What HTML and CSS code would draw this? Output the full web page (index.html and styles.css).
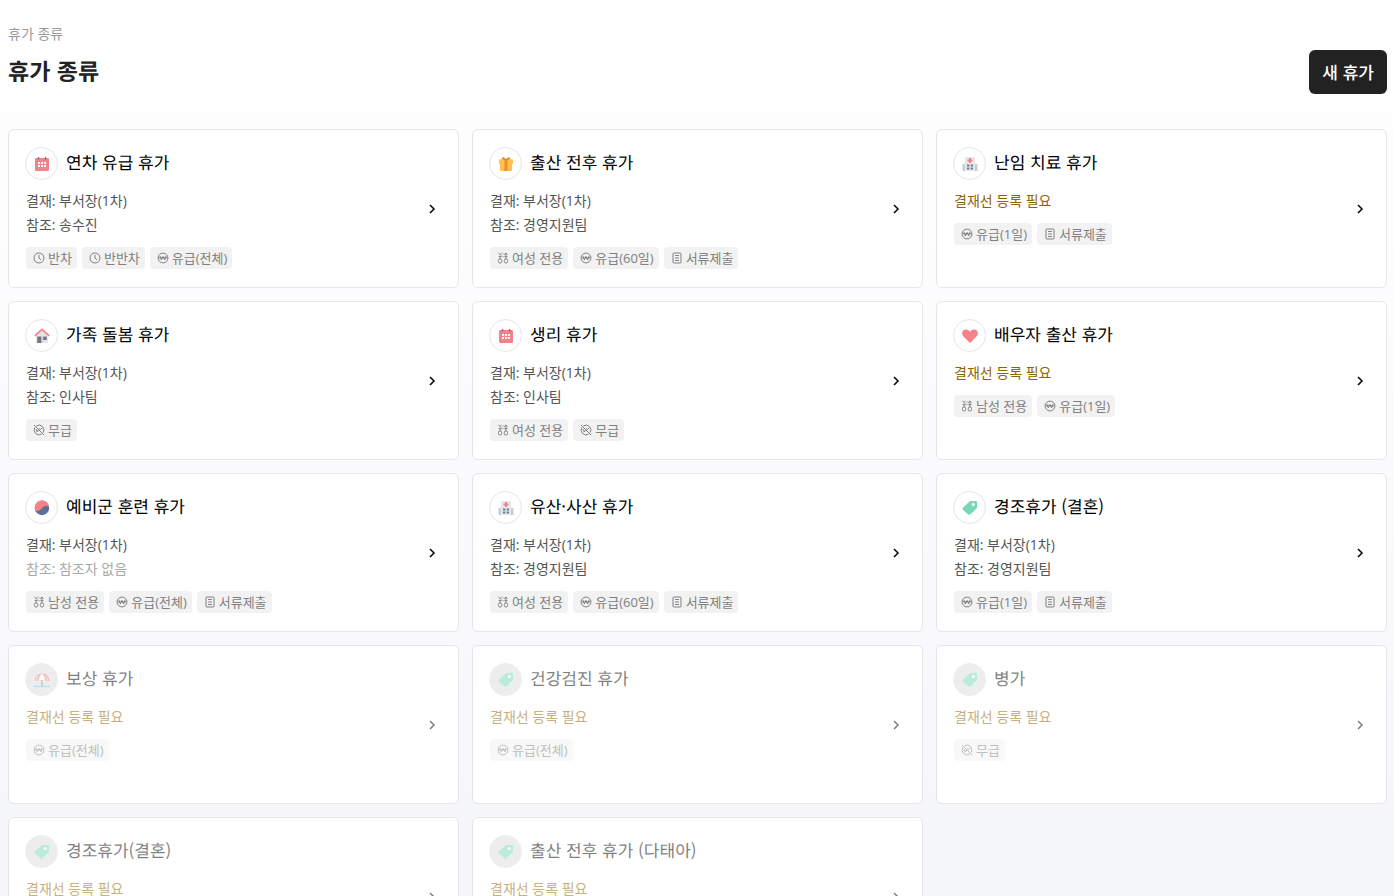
FILE: index.html
```
<!DOCTYPE html>
<html lang="ko">
<head>
<meta charset="utf-8">
<meta name="viewport" content="width=device-width, initial-scale=1">
<title>휴가 종류</title>
<link rel="stylesheet" href="styles.css">
</head>
<body>
<svg class="sprite" aria-hidden="true">
  <symbol id="calendar" viewBox="0 0 16 16"><rect x="1" y="2" width="14" height="13" rx="1.3" fill="#f5828a"/><path d="M4.5 1v2.5M11.500 1v2.500" stroke="#6b7280" stroke-width="1.2"/><path d="M4 6h2v2H4zM7 6h2v2H7zM10 6h2v2h-2zM4 9h2v2H4zM7 9h2v2H7zM10 9h2v2h-2z" fill="#fff"/></symbol>
  <symbol id="gift" viewBox="0 0 16 16"><path d="M1 4.200q0-1 1-1h12q1 0 1 1V8h-1v6q0 1-1 1H3q-1 0-1-1V8H1z" fill="#ffc14d"/><path d="M6.200 3.500h3.600V15H6.200z" fill="#f09a35"/><path d="M8 4.500 4 3.300Q3.500 1 5.500 1.300L8 3l2.500-1.700q2-.3 1.500 2z" fill="#e08a2d"/><path d="M8 5v10" stroke="#d98428" stroke-width="1" stroke-dasharray="1.500 1"/></symbol>
  <symbol id="hospital" viewBox="0 0 16 16"><path d="M3 1h10v14H3z" fill="#e4e8ec"/><path d="M.5 8H3v7H.5zM13 8h2.500v7H13z" fill="#c5cdd5"/><path d="M7 2h2v1.500h1.500v2H9V7H7V5.500H5.500v-2H7z" fill="#f5828a"/><path d="M5 8.500h2.300v2H5zM8.700 8.500H11v2H8.700zM5 11.500h2.300v2H5zM8.700 11.500H11v2H8.700z" fill="#707986"/></symbol>
  <symbol id="house" viewBox="0 0 16 16"><path d="M2 7.500 8 2l6 5.500V15H2z" fill="#e3e6e9"/><path d="M.8 7.800 8 1.300l7.200 6.500" fill="none" stroke="#f5828a" stroke-width="1.700"/><path d="M3.200 8.500h4V15h-4zM9.200 8.500h3.500V12H9.200z" fill="#727780"/><path d="M7.300 8.500h1V15h-1z" fill="#aab1b8"/></symbol>
  <symbol id="heart" viewBox="0 0 16 16"><path d="M8 15 1.500 8.500C-1.500 5.300.7 1.500 4 1.500q2.500 0 4 2.200 1.500-2.200 4-2.200c3.300 0 5.500 3.800 2.500 7z" fill="#f5828a"/></symbol>
  <symbol id="taegeuk" viewBox="0 0 16 16"><circle cx="8" cy="8" r="7.200" fill="#5e6f94"/><path d="M1.300 10.300A7.200 7.200 0 1 1 15.100 7.200C13.500 5.500 10 5.200 8 8 6 11 3 11.800 1.300 10.300z" fill="#f5828a"/></symbol>
  <symbol id="label" viewBox="0 0 16 16"><path d="M7.500 1.500q.6-.6 1.300-.6h5q1.300 0 1.300 1.300v5q0 .7-.6 1.300l-6.300 6q-1 .9-2 0L.9 9.700q-.9-1 0-2z" fill="#79d8b4"/><circle cx="11.300" cy="4.500" r="1.500" fill="#fff"/></symbol>
  <symbol id="parasol" viewBox="0 0 16 16"><path d="M.8 9C.5 4.600 3.600 1.500 8 1.500S15.500 4.600 15.200 9l-2.700-.6L8 8.600l-4.500-.2z" fill="#f7777f"/><path d="M5 9C5 5 6.500 2 8 2s3 3 3 7l-3-1z" fill="#fff"/><path d="M2.600 8.200c0-1.800.6-3.200 1.500-4.200M13.400 8.200c0-1.800-.6-3.200-1.500-4.200" fill="none" stroke="#fff" stroke-width=".7"/><path d="M8 8V14.500" stroke="#777e88" stroke-width="1.200"/><path d="M0 14.500h16" stroke="#72c4f6" stroke-width="1.400"/></symbol>
  <symbol id="clock" viewBox="0 0 12 12"><circle cx="6" cy="6" r="5"/><path d="M6 3v3.200l2 1.600"/></symbol>
  <symbol id="won" viewBox="0 0 12 12"><circle cx="6" cy="6" r="4.900"/><path d="m3 4 1.300 4L6 4.400 7.700 8 9 4M1.500 5.800h9"/></symbol>
  <symbol id="unpaid" viewBox="0 0 12 12"><path d="M3.500 1.800a4.900 4.900 0 0 1 6.700 6.700M8.500 10.200a4.900 4.900 0 0 1-6.700-6.700M1 1l10 10M3 5l1.300 3 1.500-2.500M6.300 4.200l1.200 1.500L9 4"/></symbol>
  <symbol id="gender" viewBox="0 0 12 12"><rect x="1.500" y="7" width="3.200" height="4" rx="1.400"/><rect x="7.300" y="7" width="3.200" height="4" rx="1.400"/><path d="M3.100 7V5M1.700 4.600h2.800M1.500 1l3 2.800M4.500 1 3.200 2.300M8.900 7V1M7.200 2.700 8.900 1l1.700 1.700M7.400 4.600h3M6 1.500v1M6 4v1"/></symbol>
  <symbol id="document" viewBox="0 0 12 12"><rect x="2" y="1" width="8" height="10" rx=".8"/><path d="M4 3.500h4M4 6h4M4 8.500h4"/></symbol>
  <symbol id="chevron" viewBox="0 0 10 10"><path d="m3 1 4 4-4 4"/></symbol>
</svg>
<main class="page">
  <header class="header">
    <div>
      <p class="crumb">휴가 종류</p>
      <h1 class="title">휴가 종류</h1>
    </div>
    <button class="new" type="button">새 휴가</button>
  </header>
  <div class="grid">
    <a class="card" href="#"><div class="body"><h2 class="name"><span class="circle"><svg><use href="#calendar"/></svg></span>연차 유급 휴가</h2><div class="info"><p>결재: 부서장(1차)</p><p>참조: 송수진</p></div><div class="tags"><span class="tag"><svg><use href="#clock"/></svg>반차</span><span class="tag"><svg><use href="#clock"/></svg>반반차</span><span class="tag"><svg><use href="#won"/></svg>유급(전체)</span></div></div><svg class="chevron"><use href="#chevron"/></svg></a>
    <a class="card" href="#"><div class="body"><h2 class="name"><span class="circle"><svg><use href="#gift"/></svg></span>출산 전후 휴가</h2><div class="info"><p>결재: 부서장(1차)</p><p>참조: 경영지원팀</p></div><div class="tags"><span class="tag"><svg><use href="#gender"/></svg>여성 전용</span><span class="tag"><svg><use href="#won"/></svg>유급(60일)</span><span class="tag"><svg><use href="#document"/></svg>서류제출</span></div></div><svg class="chevron"><use href="#chevron"/></svg></a>
    <a class="card" href="#"><div class="body"><h2 class="name"><span class="circle"><svg><use href="#hospital"/></svg></span>난임 치료 휴가</h2><div class="info"><p class="warn">결재선 등록 필요</p></div><div class="tags"><span class="tag"><svg><use href="#won"/></svg>유급(1일)</span><span class="tag"><svg><use href="#document"/></svg>서류제출</span></div></div><svg class="chevron"><use href="#chevron"/></svg></a>
    <a class="card" href="#"><div class="body"><h2 class="name"><span class="circle"><svg><use href="#house"/></svg></span>가족 돌봄 휴가</h2><div class="info"><p>결재: 부서장(1차)</p><p>참조: 인사팀</p></div><div class="tags"><span class="tag"><svg><use href="#unpaid"/></svg>무급</span></div></div><svg class="chevron"><use href="#chevron"/></svg></a>
    <a class="card" href="#"><div class="body"><h2 class="name"><span class="circle"><svg><use href="#calendar"/></svg></span>생리 휴가</h2><div class="info"><p>결재: 부서장(1차)</p><p>참조: 인사팀</p></div><div class="tags"><span class="tag"><svg><use href="#gender"/></svg>여성 전용</span><span class="tag"><svg><use href="#unpaid"/></svg>무급</span></div></div><svg class="chevron"><use href="#chevron"/></svg></a>
    <a class="card" href="#"><div class="body"><h2 class="name"><span class="circle"><svg><use href="#heart"/></svg></span>배우자 출산 휴가</h2><div class="info"><p class="warn">결재선 등록 필요</p></div><div class="tags"><span class="tag"><svg><use href="#gender"/></svg>남성 전용</span><span class="tag"><svg><use href="#won"/></svg>유급(1일)</span></div></div><svg class="chevron"><use href="#chevron"/></svg></a>
    <a class="card" href="#"><div class="body"><h2 class="name"><span class="circle"><svg><use href="#taegeuk"/></svg></span>예비군 훈련 휴가</h2><div class="info"><p>결재: 부서장(1차)</p><p class="none">참조: 참조자 없음</p></div><div class="tags"><span class="tag"><svg><use href="#gender"/></svg>남성 전용</span><span class="tag"><svg><use href="#won"/></svg>유급(전체)</span><span class="tag"><svg><use href="#document"/></svg>서류제출</span></div></div><svg class="chevron"><use href="#chevron"/></svg></a>
    <a class="card" href="#"><div class="body"><h2 class="name"><span class="circle"><svg><use href="#hospital"/></svg></span>유산·사산 휴가</h2><div class="info"><p>결재: 부서장(1차)</p><p>참조: 경영지원팀</p></div><div class="tags"><span class="tag"><svg><use href="#gender"/></svg>여성 전용</span><span class="tag"><svg><use href="#won"/></svg>유급(60일)</span><span class="tag"><svg><use href="#document"/></svg>서류제출</span></div></div><svg class="chevron"><use href="#chevron"/></svg></a>
    <a class="card" href="#"><div class="body"><h2 class="name"><span class="circle"><svg><use href="#label"/></svg></span>경조휴가 (결혼)</h2><div class="info"><p>결재: 부서장(1차)</p><p>참조: 경영지원팀</p></div><div class="tags"><span class="tag"><svg><use href="#won"/></svg>유급(1일)</span><span class="tag"><svg><use href="#document"/></svg>서류제출</span></div></div><svg class="chevron"><use href="#chevron"/></svg></a>
    <a class="card off" href="#"><div class="body"><h2 class="name"><span class="circle"><svg><use href="#parasol"/></svg></span>보상 휴가</h2><div class="info"><p class="warn">결재선 등록 필요</p></div><div class="tags"><span class="tag"><svg><use href="#won"/></svg>유급(전체)</span></div></div><svg class="chevron"><use href="#chevron"/></svg></a>
    <a class="card off" href="#"><div class="body"><h2 class="name"><span class="circle"><svg><use href="#label"/></svg></span>건강검진 휴가</h2><div class="info"><p class="warn">결재선 등록 필요</p></div><div class="tags"><span class="tag"><svg><use href="#won"/></svg>유급(전체)</span></div></div><svg class="chevron"><use href="#chevron"/></svg></a>
    <a class="card off" href="#"><div class="body"><h2 class="name"><span class="circle"><svg><use href="#label"/></svg></span>병가</h2><div class="info"><p class="warn">결재선 등록 필요</p></div><div class="tags"><span class="tag"><svg><use href="#unpaid"/></svg>무급</span></div></div><svg class="chevron"><use href="#chevron"/></svg></a>
    <a class="card off" href="#"><div class="body"><h2 class="name"><span class="circle"><svg><use href="#label"/></svg></span>경조휴가(결혼)</h2><div class="info"><p class="warn">결재선 등록 필요</p></div></div><svg class="chevron"><use href="#chevron"/></svg></a>
    <a class="card off" href="#"><div class="body"><h2 class="name"><span class="circle"><svg><use href="#label"/></svg></span>출산 전후 휴가 (다태아)</h2><div class="info"><p class="warn">결재선 등록 필요</p></div></div><svg class="chevron"><use href="#chevron"/></svg></a>
  </div>
</main>
</body>
</html>
```
FILE: styles.css
```
* { box-sizing: border-box; }
html { background: linear-gradient(#fff, #f5f6fa) no-repeat #f5f6fa; background-size: 100% 100vh; }
body {
  margin: 0;
  font-family: "Open Sans", "Noto Sans CJK KR", sans-serif;
  color: #000;
}
h1, h2, p { margin: 0; }
.sprite { position: absolute; width: 0; height: 0; }
.page { padding: 22px 7px 13px 8px; }
.header {
  display: flex;
  justify-content: space-between;
  align-items: flex-end;
  margin-bottom: 35px;
}
.crumb { font-size: 14px; line-height: 24px; color: #999; }
.title, .new, .name {
  font-family: "Noto Sans CJK KR", sans-serif;
  text-rendering: geometricPrecision;
}
.title { font-size: 23px; line-height: 32px; font-weight: 700; color: #222; padding: 8px 0; }
.new {
  height: 44px;
  padding: 0 13px;
  border: 0;
  border-radius: 6px;
  background: #222;
  color: #fff;
  font-size: 17px;
  line-height: 24px;
  font-weight: 500;
}
.grid {
  display: grid;
  grid-template-columns: repeat(3, minmax(0, 1fr));
  grid-auto-rows: minmax(159px, auto);
  gap: 13px;
}
.card {
  display: flex;
  align-items: center;
  padding: 17px 21px 17px 16px;
  border: 1px solid #e5e6e9;
  border-radius: 6px;
  background: #fff;
  color: #000;
  text-decoration: none;
}
.body { flex: 1; align-self: stretch; min-width: 0; }
.name {
  display: flex;
  align-items: flex-start;
  gap: 8px;
  font-size: 17px;
  line-height: 30px;
  font-weight: 400;
}
.circle {
  display: grid;
  place-items: center;
  flex: none;
  width: 33px;
  height: 33px;
  border: 1px solid #e5e5e5;
  border-radius: 50%;
}
.circle svg { width: 16px; height: 16px; }
.info {
  margin: 9px 0 10px;
  padding-left: 1px;
  font-size: 14px;
  line-height: 24px;
  color: #555;
}
.warn { color: #8f6400; }
.none { color: #aaa; }
.tags { display: flex; flex-wrap: wrap; gap: 5px; padding-left: 1px; }
.tag {
  display: flex;
  align-items: center;
  gap: 3px;
  padding: 0 5px 0 7px;
  border-radius: 4px;
  background: #f2f2f2;
  color: #808080;
  font-size: 13px;
  line-height: 22px;
}
.tag svg { width: 12px; height: 12px; fill: none; stroke: #808080; }
.chevron { width: 10px; height: 10px; fill: none; stroke: #000; stroke-width: 1.5; }
.off .body, .off .chevron { opacity: .5; }
.off .circle { background: #ddd; border-color: #ddd; }
```
